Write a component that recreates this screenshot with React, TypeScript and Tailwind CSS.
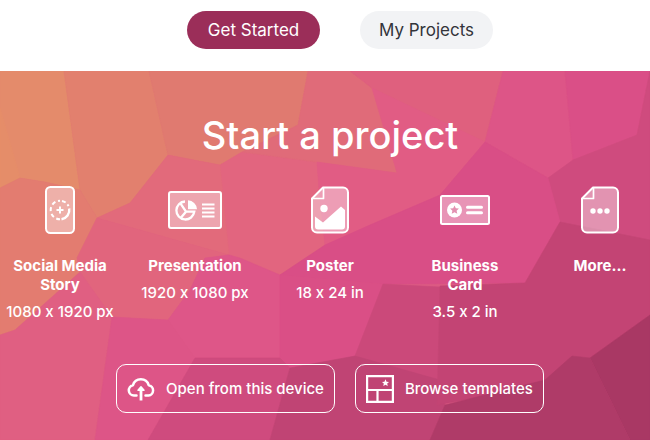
import { ReactNode } from 'react';

const cells = [
  { points: '0,71 64,71 80,190 45,182 20,178 0,188', fill: '#e48b6b' },
  { points: '0,108 20,178 0,188', fill: '#e58d69' },
  { points: '64,71 149,71 168,155 130,203 97,218 80,190', fill: '#e2806e' },
  { points: '0,188 20,178 45,182 80,190 97,218 77,258 80,272 15,330 0,335', fill: '#e37c70' },
  { points: '149,71 308,71 298,125 242,152 220,165 168,155', fill: '#e07a70' },
  { points: '220,165 242,152 317,162 319,190 325,245 280,275 229,255', fill: '#e2657f' },
  { points: '308,71 350,71 372,88 397,173 317,162 242,152 298,125', fill: '#e06b79' },
  { points: '168,155 220,165 229,255 97,218 130,203', fill: '#e26a7b' },
  { points: '97,218 229,255 205,258 190,290 168,320 112,317 80,272 77,258', fill: '#e1657d' },
  { points: '350,71 503,71 485,142 397,100 372,88', fill: '#df607e' },
  { points: '372,88 397,100 485,142 440,195 370,225 325,245 319,190 317,162 397,173', fill: '#e15c84' },
  { points: '503,71 565,71 573,160 548,178 485,142', fill: '#dd5587' },
  { points: '565,71 650,71 637,135 573,160', fill: '#da4f87' },
  { points: '650,71 637,135 573,160 548,178 560,222 650,240', fill: '#cf4b7e' },
  { points: '485,142 548,178 560,222 525,283 383,284 280,275 325,245 370,225 440,195', fill: '#d94e86' },
  { points: '0,335 15,330 80,272 112,317 95,440 0,440', fill: '#e05f82' },
  { points: '229,255 240,258 280,275 280,358 195,358 168,320 190,290 205,258', fill: '#de5688' },
  { points: '112,317 168,320 195,358 148,440 95,440', fill: '#dd5587' },
  { points: '280,275 383,284 355,358 290,368 280,358', fill: '#da4f86' },
  { points: '195,358 280,358 290,368 270,440 148,440', fill: '#cf4b7e' },
  { points: '383,284 440,287 437,405 355,356', fill: '#cb497a' },
  { points: '290,368 355,356 440,380 445,405 430,440 270,440', fill: '#c04474' },
  { points: '440,286 525,283 560,222 650,240 650,315 590,358 572,356 545,385 437,405', fill: '#c34474' },
  { points: '650,315 590,358 630,440 650,440', fill: '#a93864' },
  { points: '590,358 572,356 545,380 445,405 430,440 630,440', fill: '#af3b68' },
];

function Backdrop() {
  return (
    <svg viewBox="0 71 650 369" preserveAspectRatio="none" className="absolute inset-0 h-full w-full" aria-hidden="true">
      <rect y="71" width="650" height="369" fill="#dc5a83" />
      {cells.map((c) => (
        <polygon key={c.points} points={c.points} fill={c.fill} stroke={c.fill} strokeWidth="0.6" />
      ))}
    </svg>
  );
}

const STAR = 'M0-4.6 1.3-1.7 4.4-1.4 2.1.7 2.8 3.8 0 2.2-2.8 3.8-2.1.7-4.4-1.4-1.3-1.7Z';

function StoryIcon() {
  return (
    <svg width="30" height="48" viewBox="0 0 30 48" fill="none" stroke="#fff" strokeWidth="2">
      <rect x="1" y="1" width="28" height="46" rx="4.5" fill="#fff" fillOpacity="0.4" />
      <path d="M15 14.7a9.3 9.3 0 0 0-9.3 9.3 9.3 9.3 0 0 0 9.3 9.3" strokeDasharray="4 2.8" strokeDashoffset="2" />
      <path d="M24.2 22.5A9.3 9.3 0 0 1 16.5 33.2" strokeWidth="2.4" />
      <path d="M17 14.9a9.3 9.3 0 0 1 6.5 5.2" strokeDasharray="4 2.5" />
      <path d="M15 20.5v7M11.5 24h7" />
    </svg>
  );
}

function PresentationIcon() {
  return (
    <svg width="54" height="38" viewBox="0 0 54 38" fill="none" stroke="#fff" strokeWidth="2">
      <rect x="1" y="1" width="52" height="36" rx="2" fill="#fff" fillOpacity="0.4" />
      <path d="M17 10.5a9 9 0 1 0 9.3 10.2H18L12 27.8M18 20.7 12.6 12.6" strokeWidth="2.3" />
      <path d="M20 9.2a9.6 9.6 0 0 1 9 9h-9Z" fill="#fff" stroke="none" />
      <path d="M34 13.5h12.5M34 17.5h12.5M34 21.5h12.5M34 25.5h12.5" strokeWidth="1.8" />
    </svg>
  );
}

function PageIcon({ children }: { children: ReactNode }) {
  return (
    <svg width="38" height="48" viewBox="0 0 38 48" fill="none" stroke="#fff" strokeWidth="2" strokeLinejoin="round">
      <path d="M12 1.5H32A5 5 0 0 1 37 6.5V41.5A5 5 0 0 1 32 46.5H6A5 5 0 0 1 1 41.5V12.5Z" fill="#fff" fillOpacity="0.4" />
      <path d="M12.5 1.5V12.5H1" strokeWidth="1.7" />
      {children}
    </svg>
  );
}

function PosterIcon() {
  return (
    <PageIcon>
      <circle cx="13" cy="22.5" r="3.7" fill="#fff" stroke="none" />
      <path d="M4 30.5 12 36.5 30 20.5 34 24V40.5A3 3 0 0 1 31 43.5H7A3 3 0 0 1 4 40.5Z" fill="#fff" stroke="none" />
    </PageIcon>
  );
}

function MoreIcon() {
  return (
    <PageIcon>
      <g fill="#fff" stroke="none">
        <circle cx="12" cy="25" r="2.7" />
        <circle cx="19" cy="25" r="2.7" />
        <circle cx="26" cy="25" r="2.7" />
      </g>
    </PageIcon>
  );
}

function CardIcon() {
  return (
    <svg width="50" height="30" viewBox="0 0 50 30" fill="none" stroke="#fff" strokeWidth="2">
      <rect x="1" y="1" width="48" height="28" rx="1.5" fill="#fff" fillOpacity="0.4" />
      <circle cx="14.5" cy="15" r="7.5" fill="#fff" stroke="none" />
      <path d={STAR} transform="translate(14.5 15)" fill="#e391b1" stroke="none" />
      <path d="M27.5 12.2h14M27.5 17.8h14" strokeWidth="3" strokeLinecap="round" />
    </svg>
  );
}

function CloudIcon() {
  return (
    <svg width="28" height="28" viewBox="0 0 28 28" fill="none" stroke="#fff" strokeWidth="2.5" strokeLinecap="round" strokeLinejoin="round">
      <path d="M9.5 20.5H7A5.2 5.2 0 0 1 6 10.2 8.2 8.2 0 0 1 21.7 10.2 5.2 5.2 0 0 1 21.5 20.5H18.5" />
      <path d="M14 25.5V15" strokeLinecap="butt" strokeWidth="2.8" />
      <path d="M14 11.8 17 15.3H11Z" fill="#fff" strokeWidth="1.5" />
    </svg>
  );
}

function TemplatesIcon() {
  return (
    <svg width="28" height="28" viewBox="0 0 28 28" fill="none" stroke="#fff" strokeWidth="2.2">
      <path d="M1.1 1.1H26.9V26.9H1.1ZM1.1 15H26.9M11.5 15V26.9" />
      <path d={STAR} transform="translate(19.5 8) scale(0.8)" fill="#fff" stroke="none" />
    </svg>
  );
}

const presets = [
  { name: 'Social Media Story', size: '1080 x 1920 px', icon: StoryIcon },
  { name: 'Presentation', size: '1920 x 1080 px', icon: PresentationIcon },
  { name: 'Poster', size: '18 x 24 in', icon: PosterIcon },
  { name: 'Business Card', size: '3.5 x 2 in', icon: CardIcon },
  { name: 'More...', size: '', icon: MoreIcon },
];

export default function App() {
  return (
    <div className="flex min-h-screen flex-col overflow-hidden bg-white font-['Inter','Liberation_Sans',sans-serif]">
      <nav className="flex justify-center gap-10 pt-[11px] pb-[22px] pl-[30px] text-[17px] leading-[38px]">
        <button className="min-w-[133px] rounded-full bg-[#9b2e59] px-4 text-white">Get Started</button>
        <button className="min-w-[133px] rounded-full bg-[#f2f3f5] px-4 text-[#33343a]">My Projects</button>
      </nav>

      <main className="relative flex-1 overflow-hidden text-white">
        <Backdrop />
        <div className="relative flex flex-col items-center pt-10 pb-[27px] pl-[10px]">
          <h1 className="text-[38px] leading-[48px] font-medium">Start a project</h1>

          <div className="mt-[27px] flex justify-center">
            {presets.map((p) => (
              <button key={p.name} className="flex w-[135px] shrink-0 flex-col items-center text-[15px] leading-[19px]">
                <span className="flex h-12 items-center">
                  <p.icon />
                </span>
                <span className="mt-[22px] max-w-[100px] font-bold">{p.name}</span>
                {/* calt off, otherwise Inter swaps the x between digits for a multiplication sign */}
                {p.size && <span className="mt-2 font-medium whitespace-nowrap [font-feature-settings:'calt'_0]">{p.size}</span>}
              </button>
            ))}
          </div>

          <div className="mt-[43px] flex gap-5 text-[15px] leading-[47px] font-medium">
            <button className="flex items-center gap-[11px] rounded-[10px] border border-white px-[10px]">
              <CloudIcon />
              Open from this device
            </button>
            <button className="flex items-center gap-[11px] rounded-[10px] border border-white px-[10px]">
              <TemplatesIcon />
              Browse templates
            </button>
          </div>
        </div>
      </main>
    </div>
  );
}
